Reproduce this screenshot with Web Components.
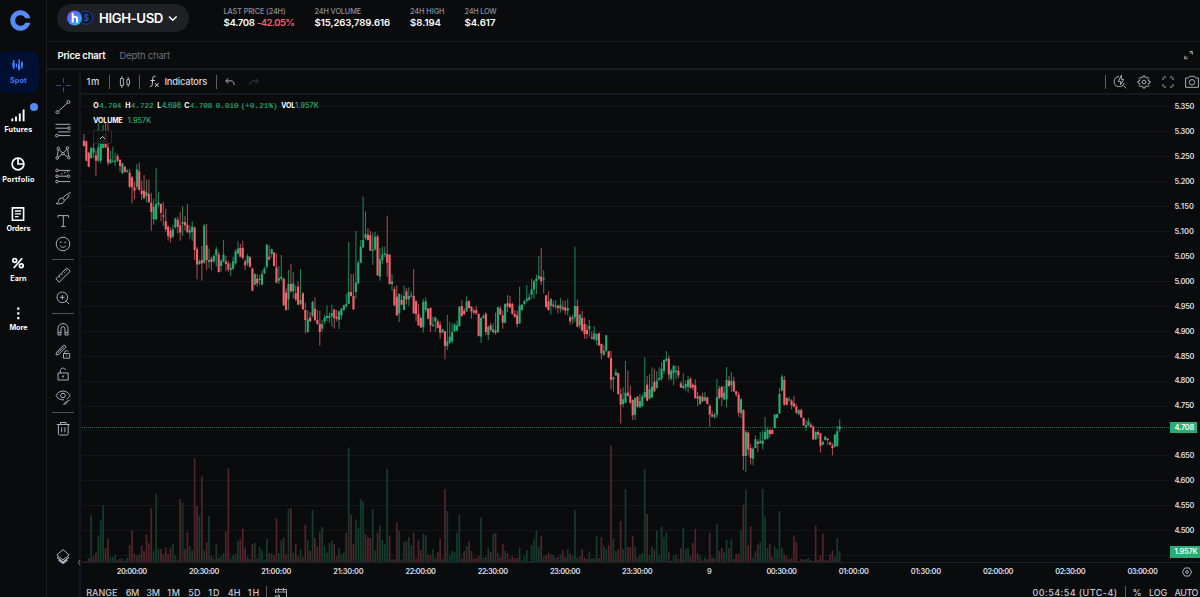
<!DOCTYPE html>
<html lang="en">
<head>
<meta charset="utf-8">
<title>HIGH-USD</title>
<style>
html,body{margin:0;height:100%;background:#0a0b0d;overflow:hidden}
body{font-family:Inter,"Liberation Sans",sans-serif;color:#fff}
</style>
</head>
<body>
<trade-app></trade-app>
<script>
const define=(name,html,setup)=>customElements.define(name,class extends HTMLElement{
  connectedCallback(){
    if(this.shadowRoot)return;
    const root=this.attachShadow({mode:'open'});
    root.innerHTML=typeof html==='function'?html(this):html;
    if(setup)setup(root,this);
  }
});

/* ---- icons, 18x18 box ---- */
const ICONS={
  spot:'<g fill="#4a80fb"><path d="M4 4h1.4v9H4zM6.8 7.5h1.4v4H6.8zM9.4 3.5h1.4v11H9.4zM12.2 5.500h1.4v7h-1.4z"/><path d="M3.3 7h2.3v4H3.3zM9 9h2.2v4H9zM11.9 6.500h2v3.500h-2z"/></g>',
  futures:'<path d="M3.300 12.600v2.600M7 10.500v4.700M10.800 7.500v7.700M14.600 3.500v11.700" stroke="#fff" stroke-width="1.900" fill="none"/>',
  portfolio:'<g fill="none" stroke="#fff" stroke-width="1.700"><circle cx="9" cy="9" r="5.900"/><path d="M9 3.200V9h5.800"/></g>',
  orders:'<g fill="none" stroke="#fff" stroke-width="1.600"><path d="M3.400 2.900h11.200v12.300H3.400z"/><path d="M6 6h6M6 8.800h6M6 11.700h3.600" stroke-width="1.300"/></g>',
  earn:'<g fill="none" stroke="#fff" stroke-width="1.700"><circle cx="5.700" cy="6.400" r="1.900"/><circle cx="12.300" cy="11.800" r="1.900"/><path d="M13.200 4.200 4.800 14"/></g>',
  more:'<g fill="#fff"><path d="M8.200 3.500h2.200v2.200H8.200zM8.200 8.200h2.200v2.200H8.200zM8.200 13h2.200v2.200H8.200z"/></g>',
  cross:'<path d="M9.500 2v5M9.500 11.500v5M2 9.500h5M12 9.500h5" stroke="#2c4b96"/>',
  trend:'<circle cx="3.400" cy="14.200" r="1.500"/><circle cx="14.400" cy="4" r="1.500"/><path d="M4.500 13.100 13.300 5.100"/>',
  fib:'<path d="M1.500 3.300h14.700M1.500 7.200H14M4.300 10.900h11.900M4 14.600h12.200"/><circle cx="15" cy="7.200" r="1.300" fill="#0a0b0d"/><circle cx="2.800" cy="14.600" r="1.300"/>',
  pattern:'<circle cx="4.300" cy="4.400" r="1.300"/><circle cx="13.500" cy="4" r="1.300"/><circle cx="3.200" cy="14" r="1.300"/><circle cx="9" cy="9.600" r="1.200"/><circle cx="14.800" cy="13.600" r="1.300"/><path d="M4.200 5.700 3.300 12.700M5.100 5.400 8.200 8.700M12.800 5.200 9.800 8.700M13.700 5.400l.9 6.900M4.300 13.100l3.700-2.800M13.600 13 10 10.300"/>',
  forecast:'<circle cx="3" cy="3.400" r="1.300"/><circle cx="3" cy="9.200" r="1.300"/><circle cx="14.500" cy="9.200" r="1.300"/><circle cx="3" cy="14.600" r="1.300"/><path d="M4.300 3.400h12M4.300 9.200h8.900M4.300 14.600h12M7 7.200l1.300-.6M10 6l1.500-.8M13 5l1.300-.4"/>',
  brush:'<path d="M2 14.600c2-.3 2.200-1.200 2.600-3 .4-2 2.100-3 4-2.300 1.800.8 2.100 2.800.9 4.100-1.500 1.600-4.500 1.800-7.500 1.200zM8.600 9.300C10.500 6.700 13.500 4.600 16.700 3.500M10.300 11.200c1.500-.4 2.500-1.300 3.700-3.200l1-2.300"/>',
  text:'<path d="M4 5.500V3.600h10.500v1.900M9.300 3.600v11M7 14.600h4.500"/>',
  smile:'<circle cx="9" cy="9" r="6.800"/><path d="M6 10.700c1.500 2.100 4.500 2.100 6 0"/><path d="M6.700 6.800v1.200M11.300 6.800v1.200" stroke-width="1.400"/>',
  ruler:'<path d="M1.800 12.800 12.800 1.900l3.400 3.400L5.200 16.200zM4.900 10l1.400 1.400M7.200 7.700l1.400 1.400M9.500 5.400l1.400 1.400M11.500 3.400l1.400 1.400"/>',
  zoom:'<circle cx="8.300" cy="8.300" r="5.300"/><path d="m12.200 12.200 3 3M8.300 6v4.600M6 8.300h4.600"/>',
  magnet:'<path d="M4 15V8.500a5 5 0 0 1 10 0V15h-3V8.700a2 2 0 0 0-4 0V15zM4 12.600h3M11 12.600h3"/>',
  penlock:'<path d="m2 11.800.6-2.600 7.300-7.300 2.300 2.200-7.400 7.300zM3.700 10l6.200-6.200M9.500 10.500h6.200v4.700H9.500zM10.700 10.500V9.200c0-2 3-2.200 3.500-.4M12.600 12.200v1"/>',
  lock:'<path d="M4 8h10.200v7H4zM6.300 8V5.600c0-3 4.400-3.400 5.200-.6"/><path d="M9 10.500v2" stroke-width="1.500"/>',
  eye:'<path d="M2 7.500c3.300-6 10.700-6 14 0-1 1.800-2.300 3-3.500 3.600M2 7.500c1.700 3.200 4.500 4.700 8 4.300"/><circle cx="9" cy="7.500" r="2.300"/><path d="M9.500 16.200c1.700-.2 1.300-2.500 3-2.500 1.200 1.300-.7 2.500-3 2.500zm3.200-2.500 3-1.600"/>',
  trash:'<path d="M2.800 5.500h12.900M6.500 5.200V3.500h5.500v1.700M4.400 5.700v8.900c0 1 .4 1.400 1.300 1.400h7.200c.9 0 1.300-.4 1.300-1.400V5.700M7.700 8.300v5M10.900 8.300v5"/>',
  layers:'<path d="M9 1.600 15.200 7 9 11.800 2.800 7z"/><path d="m3 9.200 6 4.700 6-4.700M4.500 12 9 15.400l4.500-3.400" stroke-width="1.300"/>',
  candles:'<path d="M4.400 5.500h3v7h-3zM5.900 3v2.500M5.900 12.500V15M10.900 6.600h2.600v4.800h-2.600zM12.200 4v2.600M12.200 11.400V14"/>',
  undo:'<path d="M7.300 5.300 4.700 7.900l2.600 2.600M4.900 7.900h5.200c2 0 3 1.500 3 4.100"/>',
  redo:'<path d="m10.700 5.300 2.600 2.600-2.600 2.600M13.100 7.900H7.900c-2 0-3 1.500-3 4.100" stroke="#3b3d43"/>',
  quick:'<path d="M8 3.600a5 5 0 1 0 5 6.300M12.200 12.400l2.900 2.900M10.400 2.200 7.300 8.300l2.500.2-.4 3.400 3.400-5.400-2.500-.2z"/>',
  gear:'<path d="M7.900 4.400 8 3h2l.1 1.400 1.500.6 1-1 1.400 1.400-1 1 .6 1.500 1.400.1v2l-1.400.1-.6 1.500 1 1-1.400 1.400-1-1-1.500.6L10 15H8l-.1-1.400-1.500-.6-1 1L4 12.600l1-1-.6-1.500L3 10V8l1.400-.1L5 6.400l-1-1L5.400 4l1 1z"/><circle cx="9" cy="9" r="1.800"/>',
  full:'<path d="M4 7V5.500C4 4.500 4.500 4 5.500 4H7M11 4h1.500c1 0 1.500.5 1.500 1.500V7M14 11v1.500c0 1-.5 1.500-1.500 1.500H11M7 14H5.500c-1 0-1.500-.5-1.500-1.500V11"/>',
  camera:'<path d="M2.600 5h2.700l1.200-1.700h5L12.700 5h2.700v9.300H2.600z"/><circle cx="9" cy="9.300" r="2.700"/>',
  expand:'<path d="M5.700 9.800v3h3M10.400 5.500h3v3M5.900 12.600l2.400-2.400M13.200 5.700 10.800 8.100" stroke="#a9a39b"/>',
  hexgear:'<path d="M6.700 5h4.600L13.600 9l-2.300 4H6.700L4.400 9z"/><circle cx="9" cy="9" r="1.400"/>',
  calendar:'<path d="M3.500 8V4.500h11v9H10M3.500 7h11M6.500 3v3M11.500 3v3M2.500 11h5.500M6.300 9.300 8 11l-1.700 1.700"/>'
};
define('ui-icon',el=>`<style>:host{display:block;width:18px;height:18px;flex:none}svg{display:block}</style>
<svg width="18" height="18" viewBox="0 0 18 18" fill="none" stroke="${/^(spot|more)$/.test(el.getAttribute('name'))?'none':'#abaeb6'}" stroke-width="1">${ICONS[el.getAttribute('name')]}</svg>`);

/* ---- left rail ---- */
define('nav-item',el=>`<style>
:host{display:flex;height:49.500px;width:39px;align-items:center;font:700 7.200px Inter,sans-serif}
div{position:relative;width:100%;height:41.500px;display:flex;flex-direction:column;align-items:center;gap:1.500px;padding:5px 2.200px 0 0;box-sizing:border-box;border-radius:0 9px 9px 0}
:host([active]) div{background:#001033;color:#3f78fb;border-radius:6px 9px 9px 6px}
i{position:absolute;left:29.500px;top:2.500px;width:8px;height:8px;border-radius:50%;background:#578bfa}
</style><div><ui-icon name="${el.getAttribute('icon')}"></ui-icon><fit-text w="${el.getAttribute('w')}"><slot></slot></fit-text>${el.hasAttribute('dot')?'<i></i>':''}</div>`);

define('nav-rail',`<style>
:host{display:flex;flex-direction:column;border-right:1px solid #1d1e22;box-sizing:border-box;width:47px}
header{height:47.300px;flex:none;display:flex;padding:10px 0 0 9.500px;box-sizing:border-box}
</style><header><svg width="21" height="21" viewBox="0 0 21 21"><path d="M20.400 8.300A10.200 10.200 0 1 0 20.400 12.700H15.300A5.300 5.300 0 1 1 15.300 8.300Z" fill="#578bfa"/></svg></header>
<nav-item icon="spot" active w="17">Spot</nav-item>
<nav-item icon="futures" dot w="28">Futures</nav-item>
<nav-item icon="portfolio" w="32.500">Portfolio</nav-item>
<nav-item icon="orders" w="24">Orders</nav-item>
<nav-item icon="earn" w="16.500">Earn</nav-item>
<nav-item icon="more" w="18">More</nav-item>`);

/* ---- market header ---- */
define('stat-block',`<style>
:host{display:flex;flex-direction:column;gap:1px;font:600 9.600px/12px Inter,sans-serif}
.l{font:500 7.300px/9px Inter,sans-serif;color:#8a919e}
</style><div class="l"><slot name="label"></slot></div><div><slot></slot></div>`);

define('market-header',`<style>
:host{display:flex;height:41px;border-bottom:1px solid #1d1e22;box-sizing:content-box;padding-left:10px}
.pill{display:flex;align-items:center;box-sizing:border-box;width:131.500px;height:28px;margin-top:4px;border-radius:14px;background:#1e2025;padding-left:10px;font:600 13.200px/16px Inter,sans-serif}
.pill fit-text{margin-left:5px}
.pill .chev{margin-left:5px}
.stats{display:flex;padding:7px 0 0 35px}
stat-block{flex:none}
.r{color:#f0616d}
</style>
<div class="pill"><svg width="27" height="18" viewBox="0 0 27 18"><defs><linearGradient id="g" x1="0" y1="0" x2="1" y2="1"><stop offset="0" stop-color="#7a45f5"/><stop offset=".5" stop-color="#4b7cf3"/><stop offset="1" stop-color="#12d5f0"/></linearGradient></defs><circle cx="19" cy="8.700" r="6.600" fill="#0b1430" stroke="#20459c"/><text x="19.300" y="11.700" font-size="8.500" text-anchor="middle" fill="#2f57bd" font-family="Inter">$</text><circle cx="7.500" cy="9" r="7.500" fill="url(#g)"/><path d="M5.700 3.800v9.800M5.700 9.500c.6-2.200 4.300-2.300 4.300.3v3.800" stroke="#fff" stroke-width="2" fill="none"/></svg>
<fit-text w="64">HIGH-USD</fit-text>
<svg class="chev" width="10" height="8" viewBox="0 0 10 8"><path d="M1 2.500 4.800 6.200 8.600 2.500" fill="none" stroke="#fff" stroke-width="1.500"/></svg></div>
<div class="stats">
<stat-block style="width:91px"><fit-text slot="label" w="62">LAST PRICE (24H)</fit-text><fit-text w="31">$4.708</fit-text> <fit-text class="r" w="37.500">-42.05%</fit-text></stat-block>
<stat-block style="width:95.500px"><fit-text slot="label" w="46.500">24H VOLUME</fit-text><fit-text w="75.500">$15,263,789.616</fit-text></stat-block>
<stat-block style="width:54.500px"><fit-text slot="label" w="34.500">24H HIGH</fit-text><fit-text w="31">$8.194</fit-text></stat-block>
<stat-block><fit-text slot="label" w="32">24H LOW</fit-text><fit-text w="31">$4.617</fit-text></stat-block>
</div>`);

define('tab-bar',`<style>
:host{display:flex;align-items:center;height:26px;border-bottom:2px solid #1b1c22;padding:0 3px 0 10.500px;font:600 9.500px/12px Inter,sans-serif}
fit-text{margin-top:1px}
.off{color:#6b717d;font-weight:400;margin-left:14px}
ui-icon{margin-left:auto}
</style><fit-text w="48">Price chart</fit-text><fit-text class="off" w="50.500">Depth chart</fit-text><ui-icon name="expand"></ui-icon>`);

/* ---- drawing tools ---- */
define('tool-column',`<style>
:host{display:flex;flex-direction:column;align-items:center;box-sizing:border-box;width:34px;padding:3.200px 0 0 .8px;border-right:2px solid #15171f}
ui-icon{padding:2.400px 0}
hr{width:22px;height:1px;border:0;background:#50535a;margin:3.500px 0 3.700px;flex:none}
.layers{margin-top:auto;margin-bottom:28.500px}
</style>`+['cross','trend','fib','pattern','forecast','brush','text','smile','-','ruler','zoom','-','magnet','penlock','lock','eye','-','trash'].map(n=>n==='-'?'<hr>':`<ui-icon name="${n}"></ui-icon>`).join('')+'<ui-icon class="layers" name="layers"></ui-icon>');

define('chart-toolbar',`<style>
:host{display:flex;align-items:center;height:23px;border-bottom:2px solid #17181f;padding:0 0 0 5.500px;font:500 9.300px/12px Inter,sans-serif;color:#d5d7dc}
b{width:1px;height:14px;background:#5b5e66;flex:none}
.fx{margin:0 5px 0 9px}
.right{margin-left:auto;display:flex;align-items:center;margin-right:-.5px}
</style><fit-text w="13.500">1m</fit-text><b style="margin-left:9px"></b><ui-icon name="candles" style="margin:0 5px 0 5.500px"></ui-icon><b></b>
<svg class="fx" width="11" height="13" viewBox="0 0 11 13" fill="none" stroke="#d0d2d8"><path d="M6.500 1.500C4.800.8 4 1.600 3.800 3.200L3.200 9.600c-.2 1.700-1 2.200-2.400 1.700M1.500 5.500h4.300M6 8l3.600 4M9.600 8 6 12"/></svg>
<fit-text w="42.500">Indicators</fit-text><b style="margin-left:8.500px"></b><ui-icon name="undo" style="margin-left:4.500px"></ui-icon><ui-icon name="redo" style="margin-left:6px"></ui-icon>
<div class="right"><b style="margin-right:5px"></b><ui-icon name="quick"></ui-icon><ui-icon name="gear" style="margin-left:6px"></ui-icon><ui-icon name="full" style="margin-left:6px"></ui-icon><ui-icon name="camera" style="margin-left:6px"></ui-icon></div>`);

/* ---- chart data: one-minute candles as "direction high bodyTop bodyBottom low", in thirds of a pixel under a base line ---- */
const SERIES=[
[120,`R42,62,78,80 R62,64,122,124 R95,98,140,142 G80,84,114,117 G70,84,98,114 R90,106,122,168 G10,82,122,126 G50,66,122,130 G14,60,84,84 R10,40,82,84 R10,82,128,137 G92,118,130,132 G80,122,124,128 G98,122,126,138 R102,108,122,126 R117,120,138,155 G128,130,160,162 R138,140,156,158 G147,152,156,158 R147,158,200,204 R168,172,202,250 R185,202,212,238 G132,148,200,208 R128,154,210,212 R182,212,222,240 R165,212,234,238 G180,216,228,248 R178,222,246,250 R218,248,276,332 G236,260,298,314 G143,252,298,300 G216,248,254,262 R250,252,278,304 R246,286,290,318 R266,304,328,335 R316,320,348,362 R322,332,354,368 G314,328,350,354 G292,296,322,326 R290,300,320,340 R275,316,338,362 G258,306,312,348 R288,306,316,332 R252,314,336,340 G316,330,338,356 G304,320,336,362 R320,322,390,420 R380,388,434,478 G418,424,432,434 R378,420,430,482 G312,316,428,432 R312,376,420,450 G386,420,426,444 R410,416,426,452 G402,408,424,428 G380,388,406,440 R395,404,456,458 G418,422,438,456 G360,404,424,428 R408,424,432,454 R422,430,448,456 G430,444,450,468 G410,424,446,450 G388,394,430,434 G364,386,400,404 R372,384,410,412 R362,384,414,418 R418,424,436,450 G402,408,430,438 R408,412,440,444 R442,446,512,514 G460,462,494,496 R462,476,490,500 G464,476,480,496 G452,462,494,496 G440,446,460,462 G372,374,440,446 R376,410,418,422 G386,388,402,412 R396,398,438,440 R400,442,488,490 G438,474,482,492 G405,470,476,482 R474,476,556,558 R505,518,570,572 G450,492,538,570 R432,492,514,518 G456,490,514,536 R496,520,538,544 R484,500,554,556 G447,540,552,556 R516,520,568,570 R548,570,600,640 G570,598,636,638 R576,592,604,606 G542,546,588,592 R532,566,600,604 R570,600,612,614 R572,612,636,677 G600,612,626,634 G584,592,604,612 G556,588,594,604 G578,588,594,608`],
[180,`G374,400,408,440 R388,388,414,446 R390,410,416,424 G392,394,420,447 G384,386,406,418 G374,376,390,392 G342,372,378,384 G186,336,372,372 R282,336,348,350 R282,348,388,390 G153,308,336,356 G242,248,310,312 G180,200,248,250 G50,180,202,204 G94,162,174,180 R144,164,180,182 R152,166,212,213 G158,208,212,255 G156,170,208,212 R164,170,286,288 G204,238,290,302 G200,224,240,252 G200,220,224,232 R107,222,248,290 R222,224,312,314 G282,304,312,332 R320,328,376,378 R316,350,406,408 G340,342,400,426 R344,360,374,376 G316,348,390,390 R324,334,358,374 G322,348,358,378 G334,346,350,352 R267,348,400,402 R360,364,402,424 R372,402,436,438 R410,414,442,444 G357,366,442,458 G352,364,390,398 R384,386,416,418 R382,384,436,456 G410,434,438,440 G410,412,424,456 R418,424,444,446 R424,434,458,476 G446,448,458,460 R452,454,498,538 G405,484,498,510 G426,470,488,492 G430,456,484,490 G430,434,454,456 G422,436,452,454 G378,380,438,440 R360,378,408,410 R384,392,402,406 G349,364,394,396 R360,364,384,386 R378,380,394,416 R386,392,398,404 R378,390,400,404 R400,402,468,470 G412,414,470,488 G402,408,414,416 R396,402,456,466 G436,440,464,480 R428,436,450,456 G430,448,456,460 R398,452,458,464 G380,382,456,460 R378,386,404,406 R392,406,428,446 G370,372,428,430 R345,370,380,396 R348,370,382,384 R368,372,402,404 R390,402,410,414 R392,406,432,442 G320,376,430,432 G372,374,390,392 G360,364,372,376 G315,356,362,368 G340,352,360,362 G296,328,344,356 G300,304,328,356 G284,296,304,342 G228,288,296,300 R203,290,304,315 G270,294,298,340 R345,346,380,384 R334,364,390,392 G356,356,378,404 R362,374,378,384 G360,376,380,388 R374,378,384,400 G354,374,386,398 R362,382,388,392`],
[230,`R212,232,242,254 G206,234,242,256 R256,262,274,284 G254,262,268,282 G50,228,262,276 R208,228,290,292 G252,254,286,296 R242,264,302,304 R262,282,312,326 R284,300,312,326 G270,288,298,320 R304,322,326,328 G288,310,328,332 G310,312,330,346 R308,310,346,348 R340,342,370,388 G345,362,374,378 G315,316,362,366 R362,364,382,384 R362,384,450,478 G440,442,448,486 G416,426,436,438 R428,430,492,494 R476,492,524,580 G472,508,522,532 G393,488,518,520 R422,488,498,498 R468,496,518,522 R508,510,556,570 G502,504,554,570 R498,500,530,534 G492,514,532,534 G492,500,528,532 G382,486,502,504 R438,464,512,514 G432,478,506,508 G412,470,502,504 R416,456,484,486 G424,452,474,476 G412,444,450,452 G396,416,446,452 G388,390,422,432 G363,386,392,396 R376,386,434,450 G416,422,446,452 G404,408,430,466 G406,422,426,448 R408,422,436,444 R454,460,472,474 G430,468,474,478 G452,462,472,482 G438,450,470,488 R442,446,474,476 R460,464,472,480 R448,466,504,506 R486,500,506,528 G496,498,522,524 R488,500,514,516 G486,502,512,514 R500,502,522,524 R522,528,554,590 R542,554,560,562 G548,554,560,566 G447,502,554,564 R468,476,504,508 R468,470,502,528 G468,488,508,510 G411,450,508,532 R438,452,468,472 G426,452,466,486 R440,454,484,486 R482,484,494,500 R486,494,548,560 G504,508,550,564 R538,540,678,720 G600,606,678,726 R604,608,658,676 R642,654,684,704 G652,656,686,706 G616,628,654,656 R628,636,642,666 G606,632,640,640 G602,632,642,658 G561,606,628,630 G592,600,626,628 R596,600,612,622 R596,600,612,612 G552,554,594,596 G552,552,564,564 G474,492,550,552 G434,440,482,484 R438,450,524,526 R502,504,524,526 G500,508,512,514 R508,512,526,538 R498,520,530,532 R522,530,548,552 G538,540,552,556 R536,540,562,564 R562,564,586,588 G570,586,592,602 G564,574,586,588 R578,584,592,592 R586,590,628,630 G604,606,628,630 R600,606,614,626 R610,610,648,668 G632,636,644,646 G618,620,630,632 R624,626,630,644 R634,638,644,646 R640,646,654,676 G612,614,650,652 G588,604,648,650 G568,590,598,606`]];
const VOLUME=[2,4,12,141,18,29,78,126,171,43,71,16,16,23,6,10,12,4,14,51,96,25,21,23,50,34,84,57,162,33,205,39,40,24,44,25,45,55,20,8,190,179,40,90,49,36,312,169,141,257,36,60,139,20,10,53,14,18,27,92,282,12,21,27,64,69,101,45,17,10,55,59,12,47,36,8,71,27,27,22,132,27,66,74,23,160,163,28,56,18,38,16,112,67,35,157,73,47,91,106,49,29,58,
65,55,18,43,25,29,88,345,143,55,129,105,189,181,85,75,73,160,36,88,111,67,55,280,78,10,8,120,94,8,61,63,75,51,88,12,65,36,86,82,23,23,40,14,31,71,12,220,154,20,34,31,88,142,12,34,48,63,34,12,12,18,135,14,16,43,32,85,88,28,16,55,34,27,10,18,12,13,44,6,18,37,4,51,69,94,46,80,18,22,29,24,22,14,16,25,36,16,40,26,20,157,14,18,
40,14,10,33,11,13,78,12,75,50,40,51,350,71,33,39,124,39,219,46,46,78,48,14,22,27,280,145,22,48,38,95,23,108,75,90,30,4,20,24,11,43,103,39,44,20,58,100,27,18,6,14,10,88,14,12,114,34,43,30,67,43,69,11,25,25,96,173,218,51,108,14,34,53,61,220,137,43,55,16,48,40,153,43,24,18,10,13,80,61,4,10,8,10,13,7,3,110,8,21,86,7,6,24,36,17,73,33];
const VOLUME_SIDE={4:'R',26:'R',109:'R',117:'R',126:'G',141:'G',171:'R',304:'R',307:'R'};
const STEP=2.407, FIRST=83.9, LEFT=81, TOP=95;

define('candle-plot',`<style>:host{display:block}svg{display:block}</style><svg width="1089" height="467" viewBox="${LEFT} ${TOP} 1089 467"></svg>`,root=>{
  let s='',i=0;
  for(let k=0;k<19;k++){const y=Math.round(106+24.96*k);s+=`<path d="M82 ${y+.5}H1169" stroke="#15161a"/>`;}
  const list=[];
  for(const [base,text] of SERIES)for(const c of text.trim().split(/\s+/)){
    list.push([c[0],...c.slice(1).split(',').map(v=>base+v/3)]);
  }
  const r=(x,y,w,h,f)=>`<rect x="${x.toFixed(2)}" y="${y.toFixed(2)}" width="${w}" height="${Math.max(h,.8).toFixed(2)}" fill="${f}"/>`;
  /* the counts at the joins of the listed runs are not equal, so the volume is placed from the last bar backwards */
  const shift=list.length-VOLUME.length;
  VOLUME.forEach((v,k)=>{const n=k+shift*(k>205?1:0);const side=VOLUME_SIDE[n]||(list[n]||['G'])[0];s+=r(FIRST+STEP*n-.85,562.3-v/3,1.7,v/3,side==='G'?'#133d2d':'#52252b');});
  s+='<path d="M82 427.500H1170" stroke="#1b6a4c" stroke-dasharray="1 1"/>';
  for(const [side,h,t,b,l] of list){
    const x=FIRST+STEP*i++,g=side==='G';
    s+=r(x-.55,h,1.1,l-h,g?'#1d7f56':'#a9454e')+r(x-1.05,t,2.1,b-t,g?'#27ad75':'#f6626e');
  }
  root.querySelector('svg').innerHTML=s;
});

define('chart-legend',`<style>
:host{display:flex;flex-direction:column;gap:5px;font:700 7px/10px Inter,sans-serif}
div{display:flex}
i{font:400 7.500px/10px "Liberation Mono",monospace;color:#27ad75;-webkit-text-stroke:.15px #27ad75}
.n{font-family:Inter,sans-serif;font-size:7.200px}
button{all:unset;box-sizing:border-box;width:19px;height:14px;border:1px solid #2a2c32;border-radius:2px;background:#0a0b0dcc;display:flex;align-items:center;justify-content:center;margin-top:-1px}
</style>
<div><fit-text w="6">O</fit-text><i><fit-text w="22">4.704</fit-text></i><fit-text w="5.500" style="margin-left:4px">H</fit-text><i><fit-text w="23">4.722</fit-text></i><fit-text w="4.500" style="margin-left:3.500px">L</fit-text><i class="n"><fit-text w="19.500">4.698</fit-text></i><fit-text w="5.500" style="margin-left:3px">C</fit-text><i><fit-text w="22.500">4.708</fit-text></i><i style="margin-left:3.500px"><fit-text w="23">0.010</fit-text></i><i style="margin-left:2px"><fit-text w="37">(+0.21%)</fit-text></i><fit-text w="14" style="margin-left:3.500px">VOL</fit-text><i class="n"><fit-text w="23.500">1.957K</fit-text></i></div>
<div><fit-text w="29.500">VOLUME</fit-text><i class="n" style="margin-left:5px"><fit-text w="23.500">1.957K</fit-text></i></div>
<button><svg width="7" height="5" viewBox="0 0 7 5"><path d="M1 4 3.500 1.500 6 4" fill="none" stroke="#c4c6cc"/></svg></button>`);

define('price-axis',()=>`<style>
:host{display:block;position:relative;overflow:hidden;font:600 7.400px/12px Inter,sans-serif;color:#dcdee2}
ul{list-style:none;margin:0;padding:0 0 0 4.500px}
li{height:24.960px}
b{position:absolute;left:0;background:#27ad75;color:#fff;font-weight:600;height:11.500px;box-sizing:border-box;padding-left:4.500px}
</style><ul>${Array.from({length:19},(_,k)=>`<li><fit-text w="19.500">${(5.35-k*.05).toFixed(3)}</fit-text></li>`).join('')}</ul>
<b style="top:326.500px;width:27px"><fit-text w="19.500">4.708</fit-text></b><b style="top:451.300px;width:30px"><fit-text w="23">1.957K</fit-text></b>`);

define('time-axis',()=>`<style>
:host{display:flex;height:18px;border-top:1px solid #1f2126;box-sizing:border-box;font:600 7.400px/17px Inter,sans-serif;color:#dcdee2}
.t{display:flex;padding-left:14.700px;width:1074px;overflow:hidden;box-sizing:content-box}
.t div{width:72.200px;text-align:center;flex:none}
ui-icon{margin-left:8px;margin-top:-.5px}
</style><div class="t">${['20:00:00','20:30:00','21:00:00','21:30:00','22:00:00','22:30:00','23:00:00','23:30:00','9','00:30:00','01:00:00','01:30:00','02:00:00','02:30:00','03:00:00'].map(t=>`<div><fit-text w="${t==='9'?4.5:30}">${t}</fit-text></div>`).join('')}</div><ui-icon name="hexgear"></ui-icon>`);

define('range-bar',`<style>
:host{display:flex;align-items:flex-start;height:17px;padding:6.500px 2px 0 5.300px;font:500 9px/12px Inter,sans-serif;color:#c6c8ce;box-sizing:border-box;overflow:hidden}
fit-text{margin-right:7.500px}
b{width:1px;height:13px;background:#5b5e66;flex:none;margin-top:-1px}
ui-icon{margin:-1.500px 0 0 5.500px}
.right{margin-left:auto;display:flex}
</style><fit-text w="31" style="margin-right:8.500px">RANGE</fit-text><fit-text w="13">6M</fit-text><fit-text w="13.500">3M</fit-text><fit-text w="13.500">1M</fit-text><fit-text w="12.500">5D</fit-text><fit-text w="12">1D</fit-text><fit-text w="12.500">4H</fit-text><fit-text w="12.500" style="margin-right:5.500px">1H</fit-text><b></b><ui-icon name="calendar"></ui-icon>
<div class="right"><fit-text w="85">00:54:54 (UTC-4)</fit-text><b></b><fit-text w="9" style="margin-left:6.500px">%</fit-text><fit-text w="18">LOG</fit-text><fit-text w="23.500" style="margin-right:0">AUTO</fit-text></div>`);

define('chart-panel',`<style>
:host{display:grid;grid-template-columns:1089px 30px;grid-template-rows:25px 467px 18px 17px;min-width:0}
chart-toolbar,time-axis,range-bar{grid-column:1/-1}
.plot{position:relative}
chart-legend{position:absolute;left:12.200px;top:6px}
price-axis{padding-top:6px}
.fold{position:absolute;left:-4px;top:462px}
</style><chart-toolbar></chart-toolbar><div class="plot"><candle-plot></candle-plot><chart-legend></chart-legend><svg class="fold" width="5" height="10" viewBox="0 0 5 10"><path d="M3 3 1.500 5.500 3 8" fill="none" stroke="#777a82"/></svg></div><price-axis></price-axis><time-axis></time-axis><range-bar></range-bar>`);

define('trade-app',`<style>
:host{display:grid;grid-template-columns:47px 1fr;height:597px;width:1200px;overflow:hidden;background:#0a0b0d}
main{display:flex;flex-direction:column;min-width:0}
section{display:grid;grid-template-columns:34px 1fr;height:527px}
</style><nav-rail></nav-rail><main><market-header></market-header><tab-bar></tab-bar><section><tool-column></tool-column><chart-panel></chart-panel></section></main>`);

/* text run whose tracking is adjusted to fill a given width */
define('fit-text','<style>:host{display:inline-block;white-space:pre;flex:none;text-align:left}span{display:inline-block}</style><span><slot></slot></span>',(root,el)=>{
  const span=root.querySelector('span'),w=parseFloat(el.getAttribute('w'));
  const nodes=[...root.querySelector('slot').assignedNodes({flatten:true})];
  const n=nodes.map(x=>x.textContent).join('').trim().length||1;
  el.style.width=w+'px';
  span.style.letterSpacing=((w-span.getBoundingClientRect().width)/n)+'px';
});
</script>
</body>
</html>
